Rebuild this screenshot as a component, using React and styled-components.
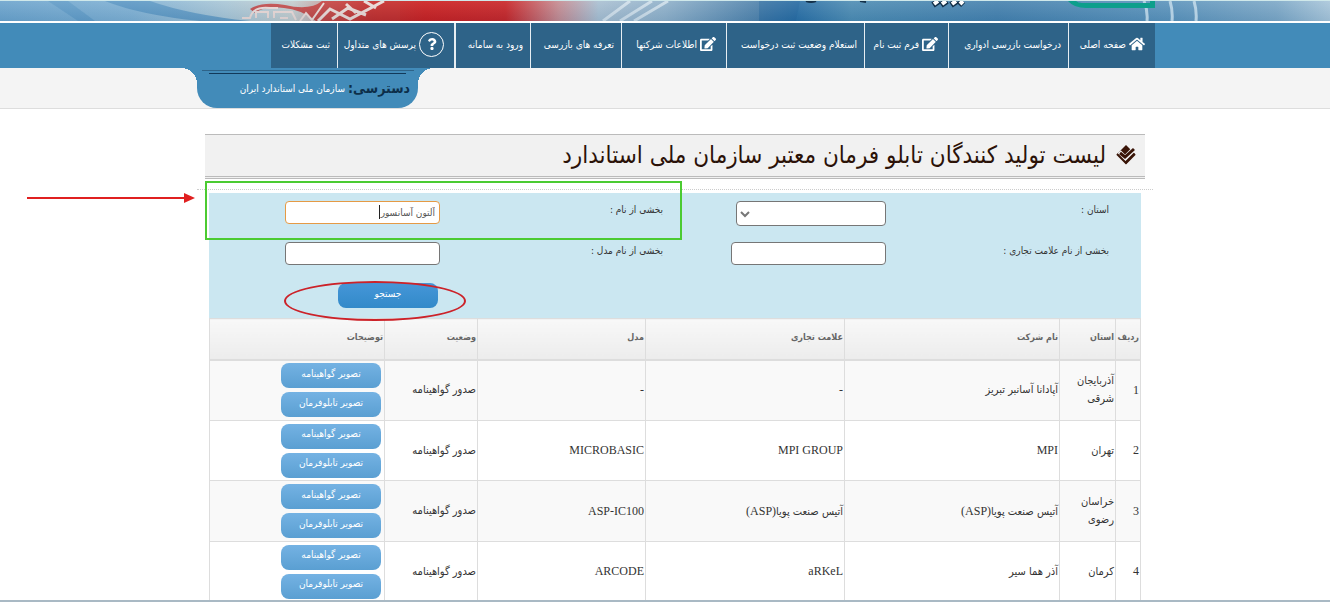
import styled, { createGlobalStyle } from 'styled-components'
import React, { useState } from 'react';
import { FaHome, FaEdit, FaQuestion } from 'react-icons/fa';

const menu = [
    { text: 'صفحه اصلی', width: 87, icon: 'home' },
    { text: 'درخواست بازرسی ادواری', width: 120 },
    { text: 'فرم ثبت نام', width: 84, icon: 'edit' },
    { text: 'استعلام وضعیت ثبت درخواست', width: 138 },
    { text: 'اطلاعات شرکتها', width: 105, icon: 'edit' },
    { text: 'تعرفه های بازرسی', width: 91 },
    { text: 'ورود به سامانه', width: 76, thick: true },
    { text: 'پرسش های متداول', width: 117, icon: 'help' },
    { text: 'ثبت مشکلات', width: 66 },
]

const columns = [
    { text: 'ردیف', width: 25 },
    { text: 'استان', width: 56 },
    { text: 'نام شرکت', width: 215 },
    { text: 'علامت تجاری', width: 199 },
    { text: 'مدل', width: 168 },
    { text: 'وضعیت', width: 93 },
    { text: 'توضیحات' },
]

const rows = [
    { province: 'آذربایجان شرقی', company: 'آپادانا آسانبر تبریز', brand: '-', model: '-' },
    { province: 'تهران', company: 'MPI', brand: 'MPI GROUP', model: 'MICROBASIC' },
    { province: 'خراسان رضوی', company: 'آتیس صنعت پویا(ASP)', brand: 'آتیس صنعت پویا(ASP)', model: 'ASP-IC100' },
    { province: 'کرمان', company: 'آذر هما سیر', brand: 'aRKeL', model: 'ARCODE' },
]

// latin words keep the serif, persian ones are set smaller
const Mixed = ({ children }) =>
    children.split(/([A-Za-z0-9()-][A-Za-z0-9() -]*)/).filter(Boolean).map((part, i) =>
        /[A-Za-z0-9-]/.test(part) ? <Latin key={i}>{part}</Latin> : part
    )

const MenuIcon = ({ name }) => {
    if (name === 'home') return <FaHome size={16} />
    if (name === 'edit') return <FaEdit size={16} />
    if (name === 'help') return <Round><FaQuestion size={12} /></Round>
    return null
}

const Banner = () => (
    <BannerSvg viewBox="0 0 1330 20" preserveAspectRatio="none" aria-hidden="true">
        <defs>
            <linearGradient id="sky">
                <stop offset="0" stopColor="#6ba3cc" />
                <stop offset="0.1" stopColor="#7fb0d3" />
                <stop offset="0.17" stopColor="#a9c6d6" />
                <stop offset="0.22" stopColor="#c3cccd" />
                <stop offset="0.255" stopColor="#c4908d" />
                <stop offset="0.28" stopColor="#c42a28" />
                <stop offset="0.32" stopColor="#cc1c1c" />
                <stop offset="0.38" stopColor="#c92224" />
                <stop offset="0.42" stopColor="#c58a90" />
                <stop offset="0.45" stopColor="#a9bfd1" />
                <stop offset="0.5" stopColor="#8fb0c9" />
                <stop offset="0.57" stopColor="#4f82ab" />
                <stop offset="0.6" stopColor="#2a6fa5" />
                <stop offset="0.64" stopColor="#4c8bb2" />
                <stop offset="0.75" stopColor="#4480ad" />
                <stop offset="0.88" stopColor="#5b93bb" />
                <stop offset="0.96" stopColor="#7ca7c6" />
                <stop offset="1" stopColor="#a9c6da" />
            </linearGradient>
            <linearGradient id="shade" x1="0" y1="0" x2="0" y2="1">
                <stop offset="0" stopColor="#ffffff" stopOpacity="0.1" />
                <stop offset="1" stopColor="#0d4776" stopOpacity="0.1" />
            </linearGradient>
        </defs>
        <rect width="1330" height="20" fill="url(#sky)" />
        <path d="M105 0H150Q190 14 250 20H200Q140 14 105 0Z" fill="#4d8dbd" opacity="0.7" />
        <path d="M48 0H68L95 20H78Z" fill="#4f8fbf" opacity="0.5" />
        <path d="M250 8Q262 0 285 4Q310 10 322 0H400V20H316Q300 8 284 7Q265 4 255 12Z" fill="#c42a28" opacity="0.8" />
        <g fill="none" stroke="#ecd9d5" strokeWidth="2">
            <path d="M242 17H250C252 8 260 6 270 7H278M256 17V11H268V17M274 17V11H292L296 19M280 17H288M300 20L306 12L312 19L324 2" />
            <path d="M318 20L330 8L350 18L384 0M332 18L348 7L366 14M346 3L356 12M364 0L376 7" strokeWidth="3" />
        </g>
        <path d="M603 20L630 0M620 20L652 0M634 20L668 0" stroke="#e5eff5" strokeWidth="3" opacity="0.7" />
        <path d="M759 0H800L796 20H759Z" fill="#1d629c" opacity="0.4" />
        <rect width="1330" height="20" fill="url(#shade)" />
        <path d="M1144 0Q1148 10 1147 20M1170 0Q1173 10 1172 20M1194 0Q1197 10 1196 20" stroke="#d9e9f3" strokeWidth="3" fill="none" opacity="0.7" />
        <path d="M1068 0Q1074 7 1086 7H1155V0H1150V2H1082Q1078 2 1076 0Z" fill="#0d9f8c" />
        <path d="M933 4L939 0M941 4L947 0M951 4L957 0M959 4L963 0" stroke="#123049" strokeWidth="6" />
        <path d="M934 3L938 0M942 3L946 0M952 3L956 0M960 3L963 0" stroke="#ffffff" strokeWidth="4" />
        <path d="M806 0Q811 2 816 0M860 0L866 1" stroke="#123049" strokeWidth="2" fill="none" />
    </BannerSvg>
)

const App = () => {
    const [name, setName] = useState('آلتون آسانسور')

    return (
        <Page>
            <GlobalStyle />
            <Banner />

            <NavBar>
                <Container>
                    <Menu>
                        {menu.map(item => (
                            <MenuItem key={item.text} $width={item.width} $thick={item.thick}>
                                <MenuLink href="#" $icon={!!item.icon}>
                                    <MenuIcon name={item.icon} />
                                    {item.text}
                                </MenuLink>
                            </MenuItem>
                        ))}
                    </Menu>
                </Container>
            </NavBar>

            <AccessBar>
                <Container>
                    <AccessTab>
                        <AccessTitle>دسترسی:</AccessTitle>
                        <AccessLink href="#">سازمان ملی استاندارد ایران</AccessLink>
                    </AccessTab>
                </Container>
            </AccessBar>

            <Main>
                <Container>
                    <Content>
                        <TitleBar>
                            <svg width="20" height="20" viewBox="0 0 20 20" aria-hidden="true">
                                <path d="M10 0L19 9L10 19L1 9Z" fill="#3a1508" />
                                <path d="M3 7L9 13L20 2" fill="none" stroke="#f1f1f1" strokeWidth="5" />
                                <path d="M4 8L9 12L18 4" fill="none" stroke="#3a1508" strokeWidth="3" />
                                <path d="M1 9L10 18L19 9" fill="none" stroke="#3a1508" strokeWidth="2" />
                            </svg>
                            <Title>لیست تولید کنندگان تابلو فرمان معتبر سازمان ملی استاندارد</Title>
                        </TitleBar>
                        <Dots />

                        <Search onSubmit={e => e.preventDefault()}>
                            <Label htmlFor="province">استان :</Label>
                            <Cell>
                                <Select id="province"><option></option></Select>
                                <Chevron viewBox="0 0 10 8" aria-hidden="true">
                                    <path d="M1 2L5 6L9 2" fill="none" stroke="#777" strokeWidth="2" />
                                </Chevron>
                            </Cell>
                            <Label htmlFor="name">بخشی از نام :</Label>
                            <Cell>
                                <Input id="name" $active value={name} onChange={e => setName(e.target.value)} />
                                <Caret />
                            </Cell>
                            <Label htmlFor="brand">بخشی از نام علامت تجاری :</Label>
                            <Cell><Input id="brand" /></Cell>
                            <Label htmlFor="model">بخشی از نام مدل :</Label>
                            <Cell><Input id="model" /></Cell>
                            <Submit>جستجو</Submit>

                            <Arrow viewBox="0 0 168 12" aria-hidden="true">
                                <path d="M0 6H160" stroke="#e02020" strokeWidth="2" />
                                <path d="M157 1L168 6L157 11Z" fill="#e02020" />
                            </Arrow>
                            <GreenBox />
                            <RedOval />
                        </Search>

                        <Table>
                            <thead>
                                <tr>
                                    {columns.map(col => <Th key={col.text} $width={col.width}>{col.text}</Th>)}
                                </tr>
                            </thead>
                            <tbody>
                                {rows.map((row, i) => (
                                    <Row key={i}>
                                        <Td><Latin>{i + 1}</Latin></Td>
                                        <Td>{row.province}</Td>
                                        <Td><Mixed>{row.company}</Mixed></Td>
                                        <Td><Mixed>{row.brand}</Mixed></Td>
                                        <Td><Mixed>{row.model}</Mixed></Td>
                                        <Td>صدور گواهینامه</Td>
                                        <Td>
                                            <Actions>
                                                <RowButton>تصویر گواهینامه</RowButton>
                                                <RowButton>تصویر تابلوفرمان</RowButton>
                                            </Actions>
                                        </Td>
                                    </Row>
                                ))}
                            </tbody>
                        </Table>
                    </Content>
                </Container>
            </Main>
        </Page>
    )
}

export default App;

const GlobalStyle = createGlobalStyle`
  * {
    box-sizing: border-box;
  }
  body {
    margin: 0;
    background: #fff;
    font-family: "DejaVu Sans Condensed", "DejaVu Sans", sans-serif;
    font-size: 10px;
    color: #333;
  }
  button, input, select {
    font: inherit;
  }
`

const Page = styled.div`
  direction: rtl;
  height: 100vh;
  display: flex;
  flex-direction: column;
  overflow: hidden;
  border-top: 1px solid #cfe8ea;
  border-bottom: 2px solid #a9b9c4;
`

const BannerSvg = styled.svg`
  display: block;
  flex: none;
  width: 100%;
  height: 20px;
  margin-bottom: 2px;
`

const Container = styled.div`
  max-width: 980px;
  margin: 0 auto;
  padding-left: 20px;
`

const NavBar = styled.nav`
  flex: none;
  background: #428bb9;
`

const Menu = styled.ul`
  display: flex;
  margin: 0;
  padding: 0;
  list-style: none;
`

const MenuItem = styled.li`
  width: ${props => props.$width}px;
  height: 45px;
  background: #2e6388;
  border-left: ${props => (props.$thick ? 2 : 1)}px solid #e6eef3;
  &:last-child {
    border-left: none;
  }
`

const MenuLink = styled.a`
  display: flex;
  align-items: center;
  gap: 3px;
  height: 42px;
  padding-right: ${props => (props.$icon ? 10 : 7)}px;
  color: #fff;
  text-decoration: none;
  white-space: nowrap;
`

const Round = styled.span`
  display: flex;
  align-items: center;
  justify-content: center;
  width: 25px;
  height: 25px;
  border: 1px solid #fff;
  border-radius: 50%;
`

const AccessBar = styled.div`
  flex: none;
  background: #f4f4f4;
  border-bottom: 1px solid #ddd;
`

const AccessTab = styled.div`
  position: relative;
  display: flex;
  align-items: center;
  gap: 3px;
  width: 221px;
  height: 40px;
  margin-right: auto;
  margin-left: 2px;
  padding: 0 8px 0 0;
  background:
    linear-gradient(#2e6388, #2e6388) 50% 2px / 212px 1px no-repeat,
    linear-gradient(#12395a, #12395a) 50% 5px / 197px 1px no-repeat,
    #428bb9;
  border-radius: 0 0 20px 20px;
  &::before,
  &::after {
    content: "";
    position: absolute;
    top: 0;
    width: 16px;
    height: 16px;
  }
  &::before {
    right: -16px;
    background: radial-gradient(circle at 100% 100%, #f4f4f4 16px, #428bb9 16px);
  }
  &::after {
    left: -16px;
    background: radial-gradient(circle at 0 100%, #f4f4f4 16px, #428bb9 16px);
  }
`

const AccessTitle = styled.strong`
  font-size: 14px;
  color: #0d2f4a;
`

const AccessLink = styled.a`
  color: #fff;
  text-decoration: none;
`

const Main = styled.main`
  flex: 1;
  min-height: 0;
  overflow: hidden;
  padding-top: 25px;
`

const Content = styled.div`
  padding: 0 10px;
`

const TitleBar = styled.header`
  display: flex;
  align-items: center;
  gap: 10px;
  height: 45px;
  padding: 0 9px 2px;
  background: #f1f1f1;
  border-top: 1px solid #bbb;
  border-bottom: 3px double #bbb;
`

const Title = styled.h1`
  margin: 0;
  font-size: 24px;
  line-height: 38px;
  font-weight: normal;
  color: #2b1208;
  white-space: nowrap;
`

const Dots = styled.div`
  height: 11px;
  margin: 0 -8px 3px;
  border-bottom: 1px dotted #ccc;
`

const Search = styled.form`
  position: relative;
  display: grid;
  grid-template-columns: repeat(3, 223px) 1fr;
  grid-auto-rows: 41px;
  align-items: start;
  margin: 0 4px;
  padding: 8px 32px 0 0;
  height: 125px;
  background: #cbe7f1;
`

const Label = styled.label`
  padding-top: 3px;
`

const Cell = styled.div`
  position: relative;
  display: flex;
`

const Input = styled.input`
  width: 155px;
  height: 23px;
  padding: 0 4px;
  border: 1px solid ${props => (props.$active ? '#e59a45' : '#767676')};
  border-radius: 4px;
  background: #fff;
  color: #555;
  outline: none;
`

const Caret = styled.span`
  position: absolute;
  top: 4px;
  right: 60px;
  width: 1px;
  height: 14px;
  background: #222;
`

const Select = styled.select`
  width: 150px;
  height: 25px;
  appearance: none;
  border: 1px solid #767676;
  border-radius: 4px;
  background: #fff;
`

const Chevron = styled.svg`
  position: absolute;
  top: 9px;
  right: 136px;
  width: 10px;
  height: 8px;
  pointer-events: none;
`

const Button = styled.button`
  width: 100px;
  height: 25px;
  padding: 0 0 4px;
  border: none;
  border-radius: 8px;
  color: #fff;
  cursor: pointer;
`

const Submit = styled(Button)`
  grid-column: 4;
  margin-right: 2px;
  background: linear-gradient(#4596d8, #328ac9);
`

const RowButton = styled(Button)`
  background: linear-gradient(#74b2e3, #5a9fd2);
`

const Arrow = styled.svg`
  position: absolute;
  top: -1px;
  left: -182px;
  width: 168px;
  height: 12px;
`

const GreenBox = styled.div`
  position: absolute;
  top: -12px;
  left: -4px;
  width: 477px;
  height: 59px;
  border: 2px solid #4bcb32;
  pointer-events: none;
`

const RedOval = styled.div`
  position: absolute;
  top: 88px;
  left: 75px;
  width: 182px;
  height: 40px;
  border: 2px solid #cc2229;
  border-radius: 50%;
  pointer-events: none;
`

const Table = styled.table`
  width: calc(100% - 8px);
  margin: 0 4px;
  table-layout: fixed;
  border-collapse: collapse;
`

const Th = styled.th`
  width: ${props => (props.$width ? props.$width + 'px' : 'auto')};
  height: 41px;
  padding: 0 1px 3px;
  border: 1px solid #ddd;
  border-bottom-width: 2px;
  background: linear-gradient(#f8f8f8, #ececec);
  color: #666;
  font-size: 9px;
  text-align: right;
  white-space: nowrap;
`

const Row = styled.tr`
  height: 60px;
  &:nth-child(odd) {
    height: 61px;
    background: #f9f9f9;
  }
`

const Td = styled.td`
  padding: 0 1px;
  border: 1px solid #ddd;
  font-size: 11px;
  line-height: 18px;
  text-align: right;
`

const Actions = styled.div`
  display: flex;
  flex-direction: column;
  gap: 4px;
  padding-right: 2px;
  font-size: 10px;
`

const Latin = styled.span`
  font-family: "Liberation Serif", serif;
  font-size: 12px;
`
